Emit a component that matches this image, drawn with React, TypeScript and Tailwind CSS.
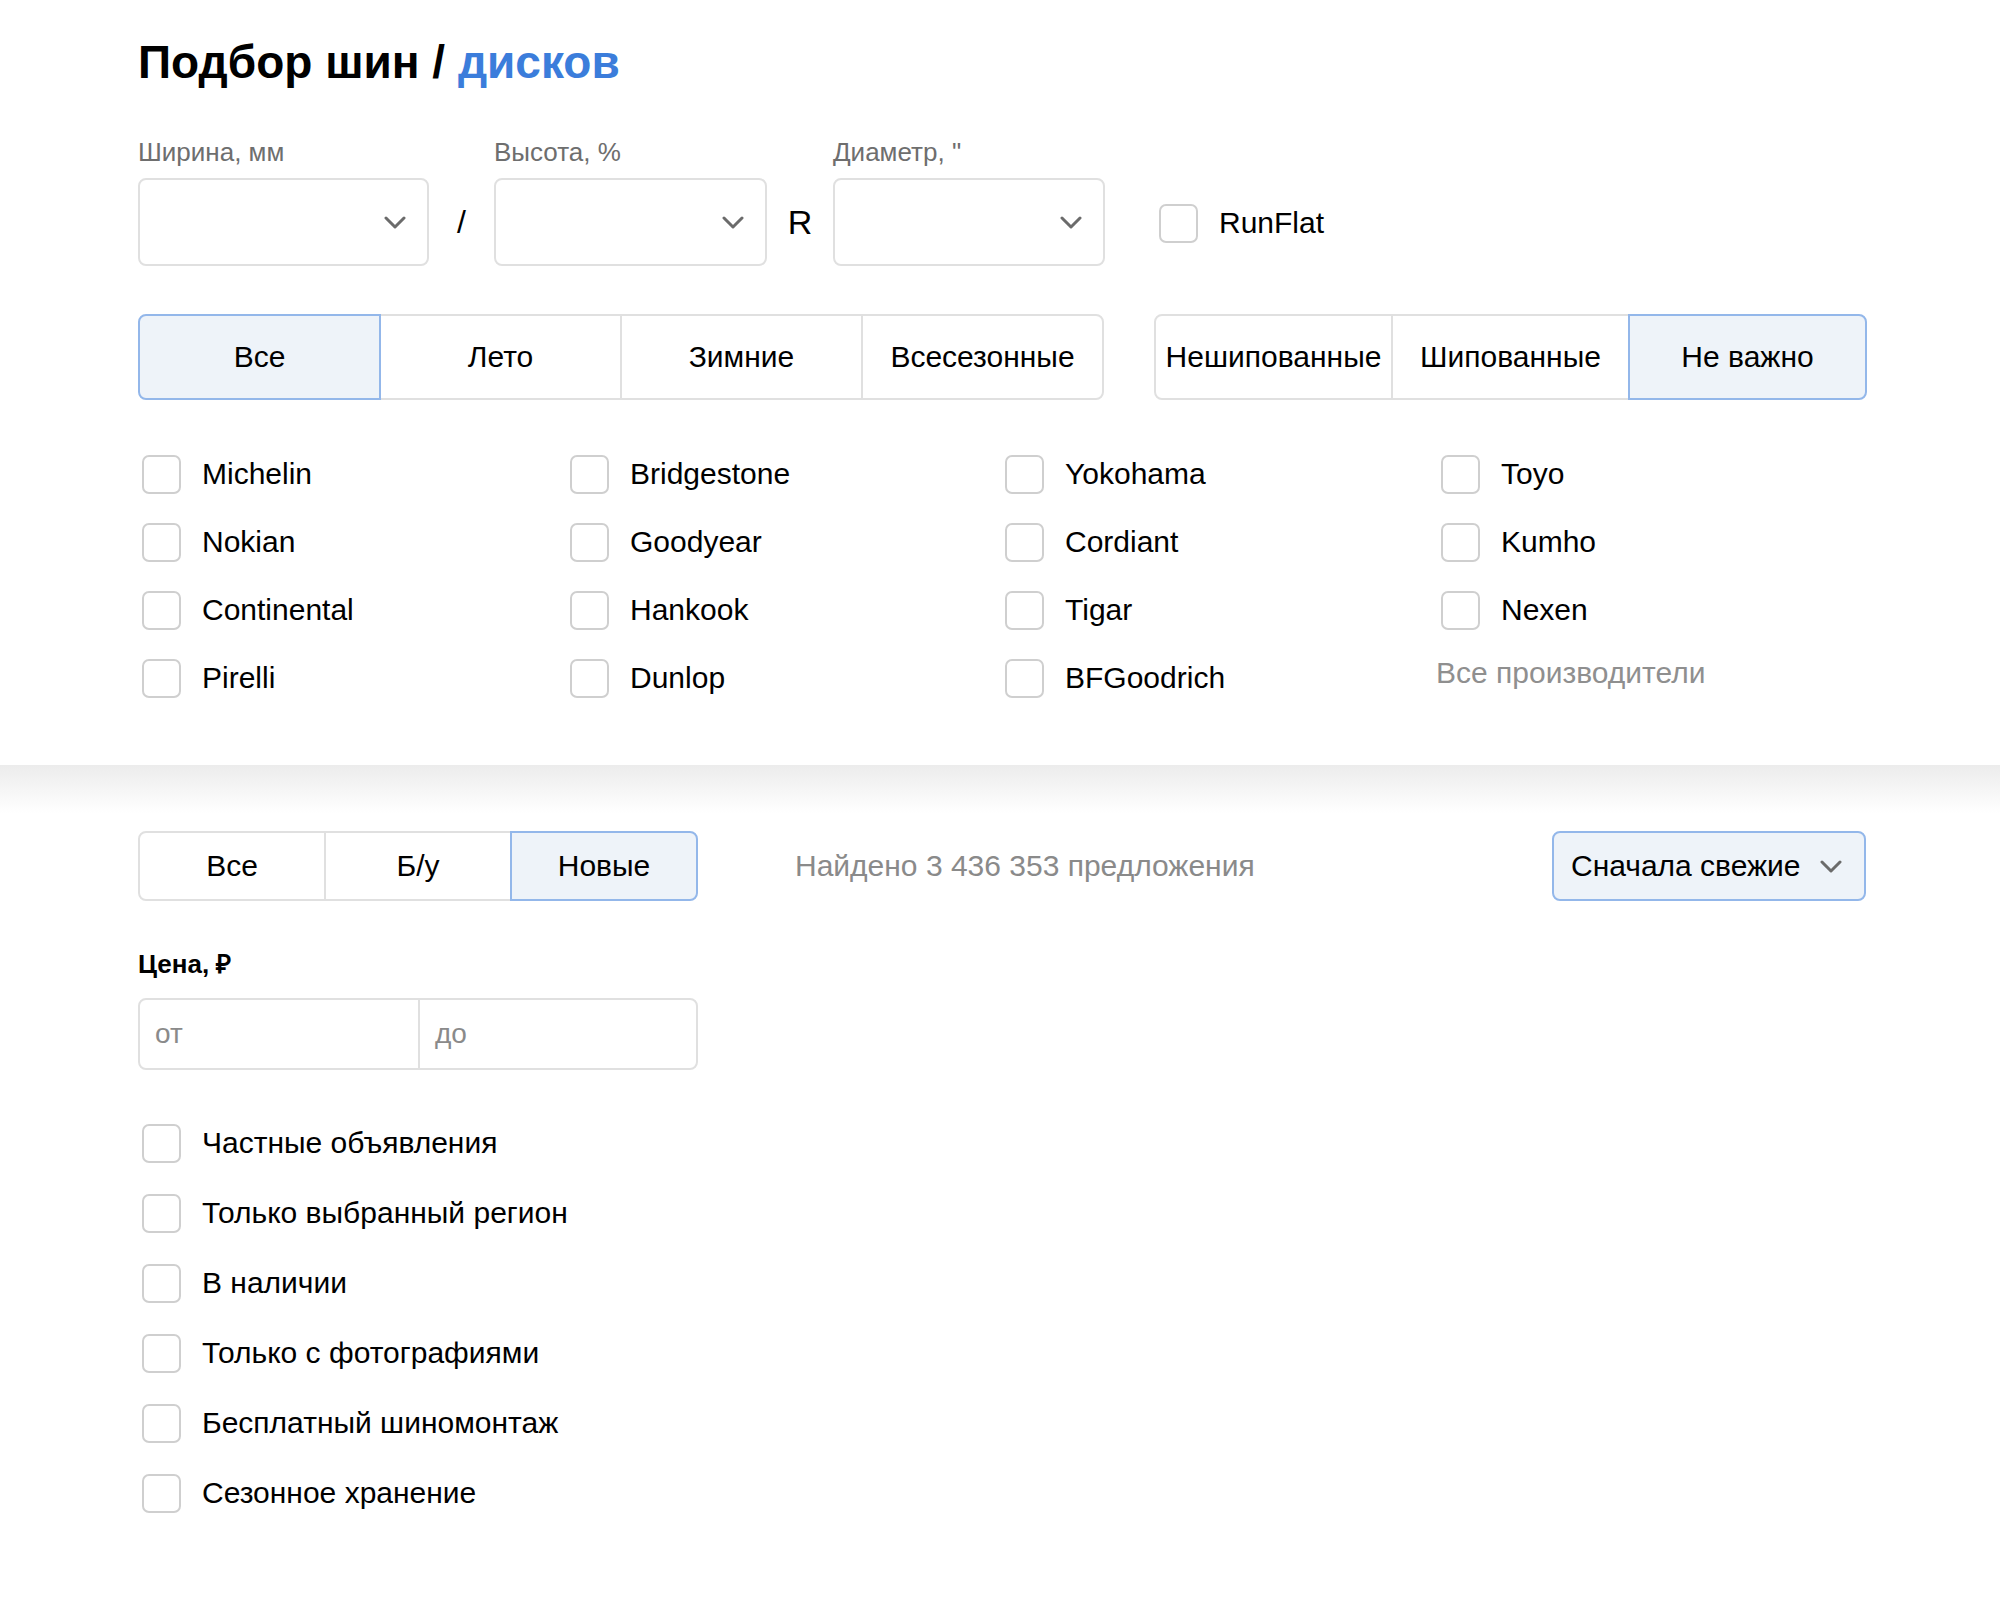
import React from "react";

const Chevron = ({ className = "" }: { className?: string }) => (
  <svg width="22" height="13" viewBox="0 0 22 13" className={className} fill="none">
    <polyline points="2,2 11,11 20,2" stroke="#6b6b6b" strokeWidth="3" strokeLinecap="round" strokeLinejoin="round" />
  </svg>
);

const Box = () => (
  <span className="block h-[39px] w-[39px] shrink-0 rounded-[7px] border-2 border-[#cfcfcf] bg-white" />
);

const Check = ({ label }: { label: string }) => (
  <label className="flex h-[40px] items-center">
    <span className="ml-[4px]">
      <Box />
    </span>
    <span className="ml-[21px] text-[30px] leading-[30px] text-black">{label}</span>
  </label>
);

const Select = ({ label, width }: { label: string; width: string }) => (
  <div className={`flex flex-col ${width}`}>
    <span className="mb-[13px] text-[26px] leading-[26px] text-[#6e6e6e]">{label}</span>
    <div className="flex h-[88px] items-center justify-end rounded-[8px] border-2 border-[#e0e0e0] bg-white pr-[21px]">
      <Chevron />
    </div>
  </div>
);

type SegProps = { items: string[]; active: number; itemClass: string; height: string };

const Segmented = ({ items, active, itemClass, height }: SegProps) => (
  <div className={`flex ${height}`}>
    {items.map((it, i) => (
      <div
        key={it}
        className={[
          "flex items-center justify-center border-2 text-[30px] leading-[30px] text-black whitespace-nowrap",
          itemClass,
          i > 0 ? "-ml-[2px]" : "",
          i === 0 ? "rounded-l-[8px]" : "",
          i === items.length - 1 ? "rounded-r-[8px]" : "",
          i === active ? "relative z-10 border-[#93b7ea] bg-[#eef3f9]" : "border-[#e0e0e0] bg-white",
        ].join(" ")}
      >
        {it}
      </div>
    ))}
  </div>
);

const brands = [
  ["Michelin", "Nokian", "Continental", "Pirelli"],
  ["Bridgestone", "Goodyear", "Hankook", "Dunlop"],
  ["Yokohama", "Cordiant", "Tigar", "BFGoodrich"],
  ["Toyo", "Kumho", "Nexen"],
];

const extras = [
  "Частные объявления",
  "Только выбранный регион",
  "В наличии",
  "Только с фотографиями",
  "Бесплатный шиномонтаж",
  "Сезонное хранение",
];

export default function App() {
  return (
    <div className="min-h-screen bg-white font-['Liberation_Sans',Arial,sans-serif] text-black">
      {/* top: tyre size + season + brands */}
      <section className="pl-[138px] pr-[136px] pt-[39px] pb-[67px]">
        <h1 className="text-[46px] font-bold leading-[46px]">
          Подбор шин / <span className="text-[#3b7ddb]">дисков</span>
        </h1>

        <div className="mt-[54px] flex items-end">
          <Select label="Ширина, мм" width="w-[291px]" />
          <div className="flex h-[88px] w-[65px] items-center justify-center text-[32px]">/</div>
          <Select label="Высота, %" width="w-[273px]" />
          <div className="flex h-[88px] w-[66px] items-center justify-center text-[34px]">R</div>
          <Select label='Диаметр, "' width="w-[272px]" />
          <label className="ml-[54px] flex h-[88px] items-center pt-[2px]">
            <Box />
            <span className="ml-[21px] text-[30px] leading-[30px]">RunFlat</span>
          </label>
        </div>

        <div className="mt-[48px] flex">
          <Segmented
            items={["Все", "Лето", "Зимние", "Всесезонные"]}
            active={0}
            itemClass="w-[243px]"
            height="h-[86px]"
          />
          <div className="ml-[50px]">
            <Segmented
              items={["Нешипованные", "Шипованные", "Не важно"]}
              active={2}
              itemClass="w-[239px]"
              height="h-[86px]"
            />
          </div>
        </div>

        <div className="mt-[54px] grid grid-cols-[428px_435px_436px_1fr]">
          {brands.map((col, ci) => (
            <div key={ci} className="flex flex-col gap-[28px]">
              {col.map((b) => (
                <Check key={b} label={b} />
              ))}
              {ci === 3 && (
                <div className="-mt-[5px] -ml-[1px] flex h-[40px] items-center text-[30px] leading-[30px] text-[#8f8f8f]">
                  Все производители
                </div>
              )}
            </div>
          ))}
        </div>
      </section>

      <div className="h-[48px] bg-gradient-to-b from-[#ececec] to-white" />

      {/* bottom: offers filter */}
      <section className="pl-[138px] pr-[134px] pt-[18px] pb-[80px]">
        <div className="flex items-center">
          <Segmented items={["Все", "Б/у", "Новые"]} active={2} itemClass="w-[188px]" height="h-[70px]" />
          <span className="ml-[97px] text-[30px] leading-[30px] text-[#8a8a8a]">Найдено 3 436 353 предложения</span>
          <button className="ml-auto flex h-[70px] w-[314px] items-center rounded-[8px] border-2 border-[#93b7ea] bg-[#eef3f9] pl-[17px] pr-[22px]">
            <span className="text-[30px] leading-[30px] text-black">Сначала свежие</span>
            <Chevron className="ml-auto" />
          </button>
        </div>

        <h3 className="mt-[50px] text-[26px] font-bold leading-[26px]">Цена, ₽</h3>

        <div className="mt-[21px] flex h-[72px] w-[560px] rounded-[8px] border-2 border-[#e0e0e0]">
          <div className="flex w-[280px] items-center border-r-2 border-[#e0e0e0] pl-[15px] text-[28px] text-[#8a8a8a]">
            от
          </div>
          <div className="flex flex-1 items-center pl-[15px] text-[28px] text-[#8a8a8a]">до</div>
        </div>

        <div className="mt-[53px] flex flex-col gap-[30px]">
          {extras.map((e) => (
            <Check key={e} label={e} />
          ))}
        </div>
      </section>
    </div>
  );
}
